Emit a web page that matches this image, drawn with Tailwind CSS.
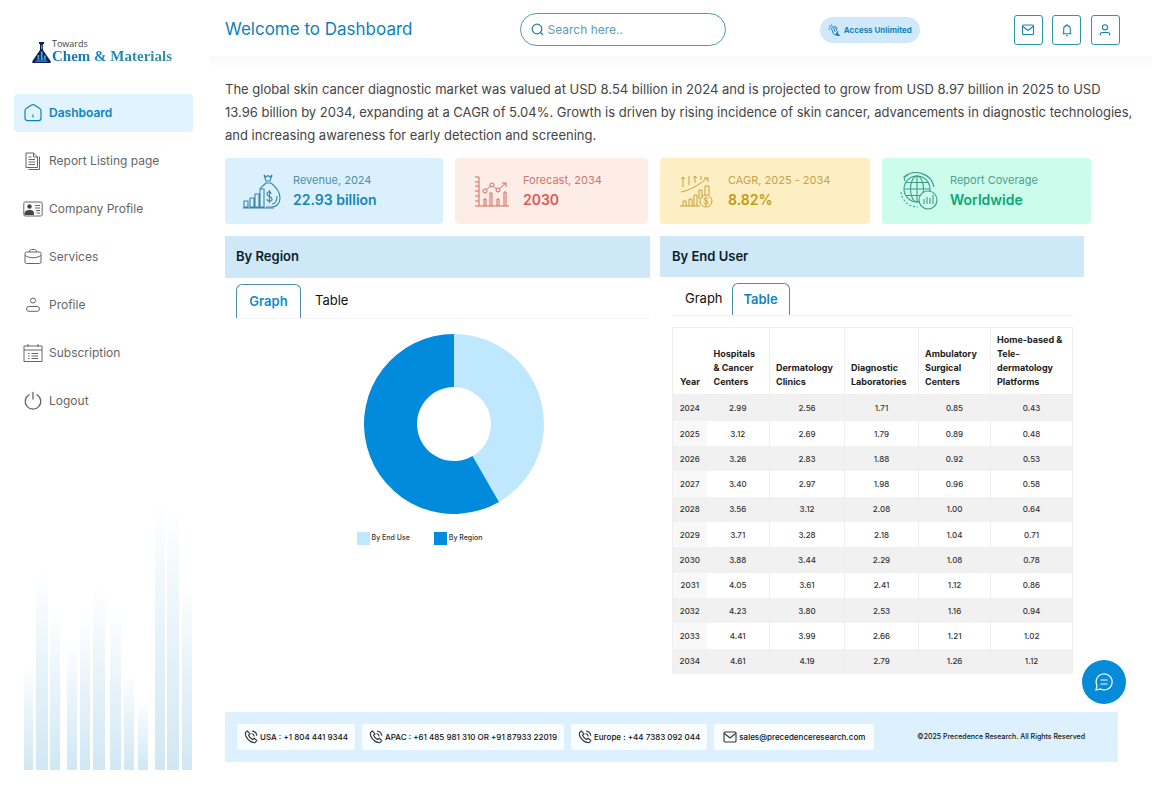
<!DOCTYPE html>
<html lang="en">
  <head>
    <meta charset="UTF-8" />
    <meta name="viewport" content="width=device-width, initial-scale=1.0" />
    <title>Dashboard | Towards Chem &amp; Materials</title>
    <script src="https://cdn.jsdelivr.net/npm/@tailwindcss/browser@4"></script>
  </head>
  <body class="bg-white font-['Inter','Liberation_Sans',sans-serif] text-[#444]">
    <div class="flex min-h-screen">
      <!-- Sidebar -->
      <aside class="flex w-[209px] shrink-0 flex-col pr-4 pb-[33px] pl-[14px]">
        <a href="#" class="mt-[40px] ml-[18px] flex h-6 items-end gap-px">
          <svg class="h-[22px] w-[19px] shrink-0" viewBox="0 0 19 22">
            <path d="M7 0h5v2h-1v6l7.500 11c.6 1.200.2 2-1 2h-16c-1.200 0-1.600-.8-1-2L8 8V2H7z" fill="#12204d" />
            <path d="M5.500 18v-5h1.800v5zM8.800 18V9.500h1.800V18zM12 18v-4.500h1.800V18z" fill="#3fa9e8" />
            <path d="M3 20l3-3.500 3 2 3-3 4 4.500z" fill="#1378c4" />
            <path d="M9 3h1.500v4H9z" fill="#5a86c8" />
          </svg>
          <span class="flex flex-col">
            <span class="h-[9px] font-['Open_Sans',sans-serif] text-[9px] leading-[9px] text-[#444]">Towards</span>
            <span class="h-4 bg-gradient-to-r from-[#1273b8] via-[#1a86b4] to-[#3b8f9a] bg-clip-text font-['Liberation_Serif',serif] text-[15px] leading-4 font-bold whitespace-nowrap text-transparent">Chem &amp; Materials</span>
          </span>
        </a>

        <nav class="mt-[30px] flex flex-col gap-[10px] text-xs text-[#666]">
          <a href="#" class="flex h-[38px] items-center gap-[6px] rounded-sm bg-[#e1f3fe] pl-[9px] font-semibold text-[#0b83bd]">
            <svg class="size-5" viewBox="0 0 20 20" fill="none" stroke="currentColor" stroke-width="1.200">
              <path d="M2 7.800c0-1 .4-1.700 1.200-2.200l5.300-3.600c1-.6 2-.6 3 0l5.300 3.600c.8.5 1.200 1.200 1.200 2.200v7.200c0 1.600-1 2.600-2.600 2.600H4.600C3 17.600 2 16.600 2 15z" />
              <path d="M10 11.500v3" />
            </svg>
            Dashboard
          </a>
          <a href="#" class="flex h-[38px] items-center gap-[6px] pl-[9px]">
            <svg class="size-5" viewBox="0 0 20 20" fill="none" stroke="currentColor">
              <path d="M3 2h7.500l4 4v10.500H3zM10.500 2v4h4" />
              <path d="M16.500 5.500v13H5.500M5.500 6h3M5.500 8.500H12M5.500 11H12M5.500 13.500H12" />
            </svg>
            Report Listing page
          </a>
          <a href="#" class="flex h-[38px] items-center gap-[6px] pl-[9px]">
            <svg class="size-5" viewBox="0 0 20 20" fill="none" stroke="currentColor">
              <rect x=".8" y="3" width="18.400" height="14" rx="1.500" />
              <circle cx="6.500" cy="7.500" r="2.200" fill="#444" stroke="none" />
              <path d="M1.500 16v-1.500c0-2.500 2-3.500 5-3.500s4.500 1 4.500 3.500V16z" fill="#444" stroke="none" />
              <path d="M12 6.500h5M12 9h5M13 11.500h4M13.500 14H17" />
            </svg>
            Company Profile
          </a>
          <a href="#" class="flex h-[38px] items-center gap-[6px] pl-[9px]">
            <svg class="size-5" viewBox="0 0 20 20" fill="none" stroke="currentColor">
              <rect x="2" y="5" width="16" height="11.500" rx="1.500" />
              <path d="M6.500 5c0-1.500.5-2.500 2-2.500h3c1.500 0 2 1 2 2.500M2 8.500c5 3 11 3 16 0" />
            </svg>
            Services
          </a>
          <a href="#" class="flex h-[38px] items-center gap-[6px] pl-[9px]">
            <svg class="size-5" viewBox="0 0 20 20" fill="none" stroke="currentColor">
              <circle cx="10" cy="5.500" r="2.500" />
              <rect x="3.500" y="11.500" width="13" height="4.800" rx="2.400" />
            </svg>
            Profile
          </a>
          <a href="#" class="flex h-[38px] items-center gap-[6px] pl-[9px]">
            <svg class="size-5" viewBox="0 0 20 20" fill="none" stroke="currentColor">
              <path d="M1 3h18v15.500H1zM1 7h18M5 1v3M15 1v3" />
              <path d="M5 10.500h1.500M8.500 10.500H15M5 13h1.500M8.500 13H15M5 15.500h1.500M8.500 15.500H15" />
            </svg>
            Subscription
          </a>
          <a href="#" class="flex h-[38px] items-center gap-[6px] pl-[9px]">
            <svg class="size-5" viewBox="0 0 20 20" fill="none" stroke="currentColor" stroke-width="1.300" stroke-linecap="round">
              <path d="M10 1.500V8M6 3.700a7.800 7.800 0 1 0 8 0" />
            </svg>
            Logout
          </a>
        </nav>

        <!-- Decorative bars -->
        <svg class="mt-auto ml-[10px] h-[270px] w-[169px]" viewBox="0 0 169 270" preserveAspectRatio="none" aria-hidden="true">
          <defs>
            <linearGradient id="fade" x1="0" y1="0" x2="0" y2="1">
              <stop offset="0" stop-color="#d6ebf6" stop-opacity="0" />
              <stop offset=".5" stop-color="#d6ebf6" stop-opacity=".6" />
              <stop offset="1" stop-color="#d0e7f3" />
            </linearGradient>
          </defs>
          <g fill="url(#fade)">
            <rect x="0" y="165" width="9" height="105" />
            <rect x="12" y="70" width="12" height="200" />
            <rect x="26" y="110" width="10" height="160" />
            <rect x="43" y="140" width="10" height="130" />
            <rect x="56" y="115" width="10" height="155" />
            <rect x="69" y="85" width="12" height="185" />
            <rect x="86" y="110" width="11" height="160" />
            <rect x="100" y="170" width="10" height="100" />
            <rect x="114" y="200" width="10" height="70" />
            <rect x="131" y="0" width="10" height="270" />
            <rect x="143" y="10" width="12" height="260" />
            <rect x="158" y="80" width="10" height="190" />
          </g>
        </svg>
      </aside>

      <div class="min-w-0 flex-1">
        <!-- Top bar -->
        <header class="grid h-14 grid-cols-[294fr_206px_288fr_106px] items-center pt-[3px] pr-8 pl-4">
          <h1 class="text-[17px] text-[#0f7fb8]">Welcome to Dashboard</h1>
          <div class="flex h-[33px] items-center gap-1 rounded-full border border-[#4a9ab0] pr-4 pl-[10px]">
            <svg class="size-[13px] shrink-0" viewBox="0 0 13 13" fill="none" stroke="#2f7f9c" stroke-width="1.300">
              <circle cx="6" cy="6" r="4.800" />
              <path d="M9.500 9.500L12 12" />
            </svg>
            <label for="search" class="sr-only">Search</label>
            <input id="search" type="text" placeholder="Search here.." class="w-full min-w-0 bg-transparent text-xs outline-none placeholder:text-[#5b9db8]" />
          </div>
          <button type="button" class="flex h-[26px] items-center gap-1 justify-self-center rounded-full bg-[#cfe9fb] px-2 text-[8px] font-bold whitespace-nowrap text-[#1683b5]">
            <svg class="size-3" viewBox="0 0 12 12" fill="none" stroke="currentColor">
              <path d="M1 2l2 1M3.500.5L4 2M.5 5H2M3 4.500c2-2.500 5-2.500 6.500 0M3.500 4.500L5 9M5.500 3.500L7 8M7.500 3.500L9 7M5 9c1 2 3 2 4 1l1-3" />
              <path d="M9 8.500l2.500 3H8.500z" fill="currentColor" />
            </svg>
            Access Unlimited
          </button>
          <div class="flex justify-between">
            <button type="button" aria-label="Messages" class="grid h-[30px] w-[29px] place-items-center rounded-[3px] border border-[#2b96a5]">
              <svg class="size-[14px]" viewBox="0 0 14 14" fill="none" stroke="#1a80a8" stroke-width="1.100">
                <rect x="1.500" y="2" width="11" height="9.500" rx="1" />
                <path d="M2 3.500l5 4 5-4" />
              </svg>
            </button>
            <button type="button" aria-label="Notifications" class="grid h-[30px] w-[29px] place-items-center rounded-[3px] border border-[#2b96a5]">
              <svg class="size-[14px]" viewBox="0 0 14 14" fill="none" stroke="#1a80a8" stroke-width="1.100">
                <path d="M2.500 10.800h9M3.700 10.800V5.900a3.300 3.300 0 0 1 6.600 0v4.900M7 1v1.600M6 12.800h2" />
              </svg>
            </button>
            <button type="button" aria-label="Account" class="grid h-[30px] w-[29px] place-items-center rounded-[3px] border border-[#2b96a5]">
              <svg class="size-[14px]" viewBox="0 0 14 14" fill="none" stroke="#1a80a8" stroke-width="1.100">
                <circle cx="7" cy="4.300" r="2.600" />
                <path d="M2.300 12.500v-1c0-1.300.8-2 2-2h5.400c1.200 0 2 .7 2 2v1" />
              </svg>
            </button>
          </div>
        </header>

        <main class="bg-gradient-to-b from-[#f9f9fa] to-white to-2% pt-[22px] pl-4">
          <p class="mr-4 text-[13px] leading-[23px] text-[#444]">
            The global skin cancer diagnostic market was valued at USD 8.54 billion in 2024 and is projected to grow from USD 8.97 billion in 2025 to USD 13.96 billion by 2034, expanding at a CAGR of 5.04%. Growth is driven by rising incidence of skin cancer, advancements in diagnostic technologies, and increasing awareness for early detection and screening.
          </p>

          <!-- Key figures -->
          <section class="mt-[11px] mr-[61px] grid grid-cols-[218fr_193fr_210fr_209fr] gap-3">
            <div class="flex h-[66px] items-center gap-3 rounded-sm bg-[#daf0fd] pl-[18px]">
              <svg class="size-[38px] shrink-0" viewBox="0 0 38 38" fill="none" stroke="#3b85a8" stroke-width="1.100">
                <path d="M1 29h4v6H1zM7 26h4v9H7zM12 22h4v13h-4zM17 17h4v18h-4zM0 36h31" />
                <path d="M21 3l2 2 2-1.500L27 5l2-2-2 6h-4zM22 11h6M23 11c-3 3-5 4-6 6M28 11c5 4 9 9 9 15 0 6-4 9-8 9h-6" />
                <path d="M28 22c0-3-4-3-4 0 0 3 5 2 5 5 0 3-5 3-5 0M26.500 18v13M34 24c0 5-2 8-5 8" />
              </svg>
              <div>
                <p class="text-[11px] leading-4 text-[#4b8fae]">Revenue, 2024</p>
                <p class="mt-[2px] text-sm leading-5 font-semibold text-[#1a85b5]">22.93 billion</p>
              </div>
            </div>
            <div class="flex h-[66px] items-center gap-3 rounded-sm bg-[#feece7] pl-[18px]">
              <svg class="size-[38px] shrink-0" viewBox="0 0 36 38" fill="none" stroke="#cf6a60">
                <path d="M5 5v29h30M1 5h4M1 10h4M1 14h4M1 19h4M1 24h4M1 29h4M1 34h4" />
                <path d="M10 34v-7h2v7M16 34V21h2v13M23 34v-7h2v7M30 34V20h2v14" />
                <circle cx="11" cy="19" r="2" />
                <circle cx="18" cy="13" r="2" />
                <circle cx="24" cy="18" r="2" />
                <path d="M12.500 17.500l4-3.500M20 14.500l2.500 2.500M25.500 16.500L32 11M28 11h4v4" />
              </svg>
              <div>
                <p class="text-[11px] leading-4 text-[#c8786e]">Forecast, 2034</p>
                <p class="mt-[2px] text-sm leading-5 font-semibold text-[#dd5a55]">2030</p>
              </div>
            </div>
            <div class="flex h-[66px] items-center gap-3 rounded-sm bg-[#fdeec4] pl-[18px]">
              <svg class="size-[38px] shrink-0" viewBox="0 0 36 38" fill="none" stroke="#c9a233">
                <path d="M1 34h20M4 34v-5h3v5M10 34v-7h3v7M15 34V23h3v11M20 27V18h3v8M26 23v-9h4v9" />
                <path d="M2 20C12 18 20 13 28 6M25 6h4v4M4 5v10M10 4v9M16 4v7M22 4v4M2 7l2-2 2 2M14 6l2-2 2 2" />
                <circle cx="27" cy="29" r="6" />
                <path d="M29 27c0-2-4-2-4 0 0 2 4 1 4 3.500 0 2-4 2-4 0M27 25v9" />
              </svg>
              <div>
                <p class="text-[11px] leading-4 text-[#c3a34d]">CAGR, 2025 - 2034</p>
                <p class="mt-[2px] text-sm leading-5 font-semibold text-[#bd9c10]">8.82%</p>
              </div>
            </div>
            <div class="flex h-[66px] items-center gap-3 rounded-sm bg-[#ccfcec] pl-[18px]">
              <svg class="size-[38px] shrink-0" viewBox="0 0 38 38" fill="none" stroke="#3d9c83" stroke-width="1.100">
                <circle cx="17" cy="17" r="13" />
                <ellipse cx="17" cy="17" rx="6.500" ry="13" />
                <path d="M17 4v26M4 17h26M6 10.500h22M6 23.500h16M5 5C13-3 31 0 34 15M8 2L4 5l1 4" />
                <path d="M1 20c1 9 8 15 17 15" stroke-dasharray="2 2" />
                <circle cx="28" cy="28" r="9" fill="#ccfcec" />
                <path d="M24 32v-5M27 32v-7M30 32v-6M33 32v-9" />
              </svg>
              <div>
                <p class="text-[11px] leading-4 text-[#4f9f8c]">Report Coverage</p>
                <p class="mt-[2px] text-sm leading-5 font-semibold text-[#0fa673]">Worldwide</p>
              </div>
            </div>
          </section>

          <section class="mt-3 mr-[68px] grid grid-cols-[427fr_422fr] gap-[10px]">
            <!-- By Region -->
            <article>
              <h2 class="flex h-[42px] items-center bg-[#cee8f7] px-[11px] text-[13px] font-semibold text-[#0c1d2b]">By Region</h2>
              <div class="ml-[11px] flex border-b border-[#f4f4f6] pt-[6px] text-[13px]">
                <button type="button" class="-mb-px h-[34px] w-[65px] rounded-t-md border border-b-0 border-[#4a8fb0] bg-white font-semibold text-[#0b8ccb]">Graph</button>
                <button type="button" class="h-[34px] px-[14px] text-[#111]">Table</button>
              </div>
              <div class="mt-[15px] flex justify-center pl-8">
                <svg class="size-[180px]" viewBox="0 0 180 180" role="img" aria-label="Share by region and end use">
                  <path d="M90 0A90 90 0 0 1 135 167.940L108.500 122.040A37 37 0 0 0 90 53z" fill="#bfe8fe" />
                  <path d="M135 167.940A90 90 0 1 1 90 0V53A37 37 0 1 0 108.500 122.040z" fill="#028bdc" />
                </svg>
              </div>
              <div class="mt-[18px] flex justify-center gap-[24px] pr-9 text-[7px] font-medium text-[#333]">
                <span class="flex items-center gap-[2px]"><i class="size-[13px] bg-[#bfe8fe]"></i>By End Use</span>
                <span class="flex items-center gap-[2px]"><i class="size-[13px] bg-[#028bdc]"></i>By Region</span>
              </div>
            </article>

            <!-- By End User -->
            <article class="pb-[38px]">
              <h2 class="flex h-[41px] items-center bg-[#cee8f8] px-[12px] text-[13px] font-semibold text-[#0c1d2b]">By End User</h2>
              <div class="mr-[11px] ml-[12px] flex border-b border-[#f4f4f6] pt-[6px] text-[13px]">
                <button type="button" class="h-8 pr-[9px] pl-[13px] text-[#111]">Graph</button>
                <button type="button" class="-mb-px h-8 w-[58px] rounded-t-md border border-b-0 border-[#4a8fb0] bg-white font-semibold text-[#1383bd]">Table</button>
              </div>
              <div class="mt-[11px] mr-[11px] ml-[12px]">
                <table class="h-[347px] w-full table-fixed border-collapse text-center text-[8px] font-medium text-[#333]">
                  <thead>
                    <tr class="h-[67px] border border-[#f1eeee] text-left align-bottom text-[9px] leading-[14px] text-[#1c1c1c]">
                      <th class="w-[34px] pb-[5px] pl-[7px] font-bold">Year</th>
                      <th class="w-[63px] border-r border-[#f1eeee] pb-[5px] pl-[7px] font-bold">Hospitals &amp;&nbsp;Cancer Centers</th>
                      <th class="w-[75px] border-r border-[#f1eeee] pb-[5px] pl-[6px] font-bold">Dermatology Clinics</th>
                      <th class="w-[74px] border-r border-[#f1eeee] pb-[5px] pl-[6px] font-bold">Diagnostic Laboratories</th>
                      <th class="w-[72px] border-r border-[#f1eeee] pb-[5px] pl-[6px] font-bold">Ambulatory Surgical Centers</th>
                      <th class="w-[82px] pb-[5px] pl-[6px] font-bold">Home-based &amp; Tele-<wbr />dermatology Platforms</th>
                    </tr>
                  </thead>
                  <tbody class="border-x border-[#f1eeee] [&_td]:border-r [&_td]:border-[#f1eeee] [&_td]:p-0 [&_td:first-child]:border-r-0 [&_td:first-child]:bg-[#f8f8f8] [&_tr:nth-child(odd)]:bg-[#f1f1f1] [&_tr:nth-child(odd)_td:first-child]:bg-[#f1f1f1]">
                    <tr><td>2024</td><td>2.99</td><td>2.56</td><td>1.71</td><td>0.85</td><td>0.43</td></tr>
                    <tr><td>2025</td><td>3.12</td><td>2.69</td><td>1.79</td><td>0.89</td><td>0.48</td></tr>
                    <tr><td>2026</td><td>3.26</td><td>2.83</td><td>1.88</td><td>0.92</td><td>0.53</td></tr>
                    <tr><td>2027</td><td>3.40</td><td>2.97</td><td>1.98</td><td>0.96</td><td>0.58</td></tr>
                    <tr><td>2028</td><td>3.56</td><td>3.12</td><td>2.08</td><td>1.00</td><td>0.64</td></tr>
                    <tr><td>2029</td><td>3.71</td><td>3.28</td><td>2.18</td><td>1.04</td><td>0.71</td></tr>
                    <tr><td>2030</td><td>3.88</td><td>3.44</td><td>2.29</td><td>1.08</td><td>0.78</td></tr>
                    <tr><td>2031</td><td>4.05</td><td>3.61</td><td>2.41</td><td>1.12</td><td>0.86</td></tr>
                    <tr><td>2032</td><td>4.23</td><td>3.80</td><td>2.53</td><td>1.16</td><td>0.94</td></tr>
                    <tr><td>2033</td><td>4.41</td><td>3.99</td><td>2.66</td><td>1.21</td><td>1.02</td></tr>
                    <tr><td>2034</td><td>4.61</td><td>4.19</td><td>2.79</td><td>1.26</td><td>1.12</td></tr>
                  </tbody>
                </table>
              </div>
            </article>
          </section>
        </main>

        <!-- Contact strip -->
        <footer class="mr-[34px] ml-4 flex h-[50px] items-center gap-[7px] bg-[#dcf1fd] pr-[33px] pl-3 text-[8px] font-medium whitespace-nowrap text-[#111]">
          <a href="tel:+18044419344" class="flex h-[26px] items-center gap-[2px] rounded-[3px] bg-[#f9fdff] px-[7px]">
            <svg class="size-[14px]" viewBox="0 0 14 14" fill="none" stroke="#333" stroke-width="1.100">
              <path d="M3.500 1L1.500 2.500C.5 7 6 13 11 12.800l1.800-2.300-2.600-2.200-1.700 1.200C6.500 8.500 5.300 7 4.600 5.200L6 4z" />
              <path d="M7.500 3.500c1.500.3 2.500 1.200 2.800 2.800M8 1c2.500.2 4.500 2.200 4.800 4.800" />
            </svg>
            USA : +1 804 441 9344
          </a>
          <a href="tel:+61485981310" class="flex h-[26px] items-center gap-[2px] rounded-[3px] bg-[#f9fdff] px-[7px]">
            <svg class="size-[14px]" viewBox="0 0 14 14" fill="none" stroke="#333" stroke-width="1.100">
              <path d="M3.500 1L1.500 2.500C.5 7 6 13 11 12.800l1.800-2.300-2.600-2.200-1.700 1.200C6.500 8.500 5.300 7 4.600 5.200L6 4z" />
              <path d="M7.500 3.500c1.500.3 2.500 1.200 2.800 2.800M8 1c2.500.2 4.500 2.200 4.800 4.800" />
            </svg>
            APAC : +61 485 981 310 OR +91 87933 22019
          </a>
          <a href="tel:+447383092044" class="flex h-[26px] items-center gap-[2px] rounded-[3px] bg-[#f9fdff] px-[7px]">
            <svg class="size-[14px]" viewBox="0 0 14 14" fill="none" stroke="#333" stroke-width="1.100">
              <path d="M3.500 1L1.500 2.500C.5 7 6 13 11 12.800l1.800-2.300-2.600-2.200-1.700 1.200C6.500 8.500 5.300 7 4.600 5.200L6 4z" />
              <path d="M7.500 3.500c1.500.3 2.500 1.200 2.800 2.800M8 1c2.500.2 4.500 2.200 4.800 4.800" />
            </svg>
            Europe : +44 7383 092 044
          </a>
          <a href="mailto:sales@precedenceresearch.com" class="flex h-[26px] items-center gap-[2px] rounded-[3px] bg-[#f9fdff] px-[9px]">
            <svg class="size-[14px]" viewBox="0 0 14 14" fill="none" stroke="#333" stroke-width="1.100">
              <rect x="1" y="2" width="12" height="10" rx="1" />
              <path d="M1.500 3.500L7 8l5.500-4.500" />
            </svg>
            sales@precedenceresearch.com
          </a>
          <small class="ml-auto text-[7px] font-medium">©2025 Precedence Research. All Rights Reserved</small>
        </footer>
      </div>
    </div>

    <button type="button" aria-label="Open chat" class="fixed right-[26px] bottom-[99px] grid size-[44px] place-items-center rounded-full bg-[#068bd8]">
      <svg class="size-5" viewBox="0 0 20 20" fill="none" stroke="#fff" stroke-width="1.200" stroke-linecap="round">
        <path d="M2 18l1-4.500A8 8 0 1 1 6.500 17z" />
        <path d="M7 8h6M7 12h6" />
      </svg>
    </button>
  </body>
</html>
